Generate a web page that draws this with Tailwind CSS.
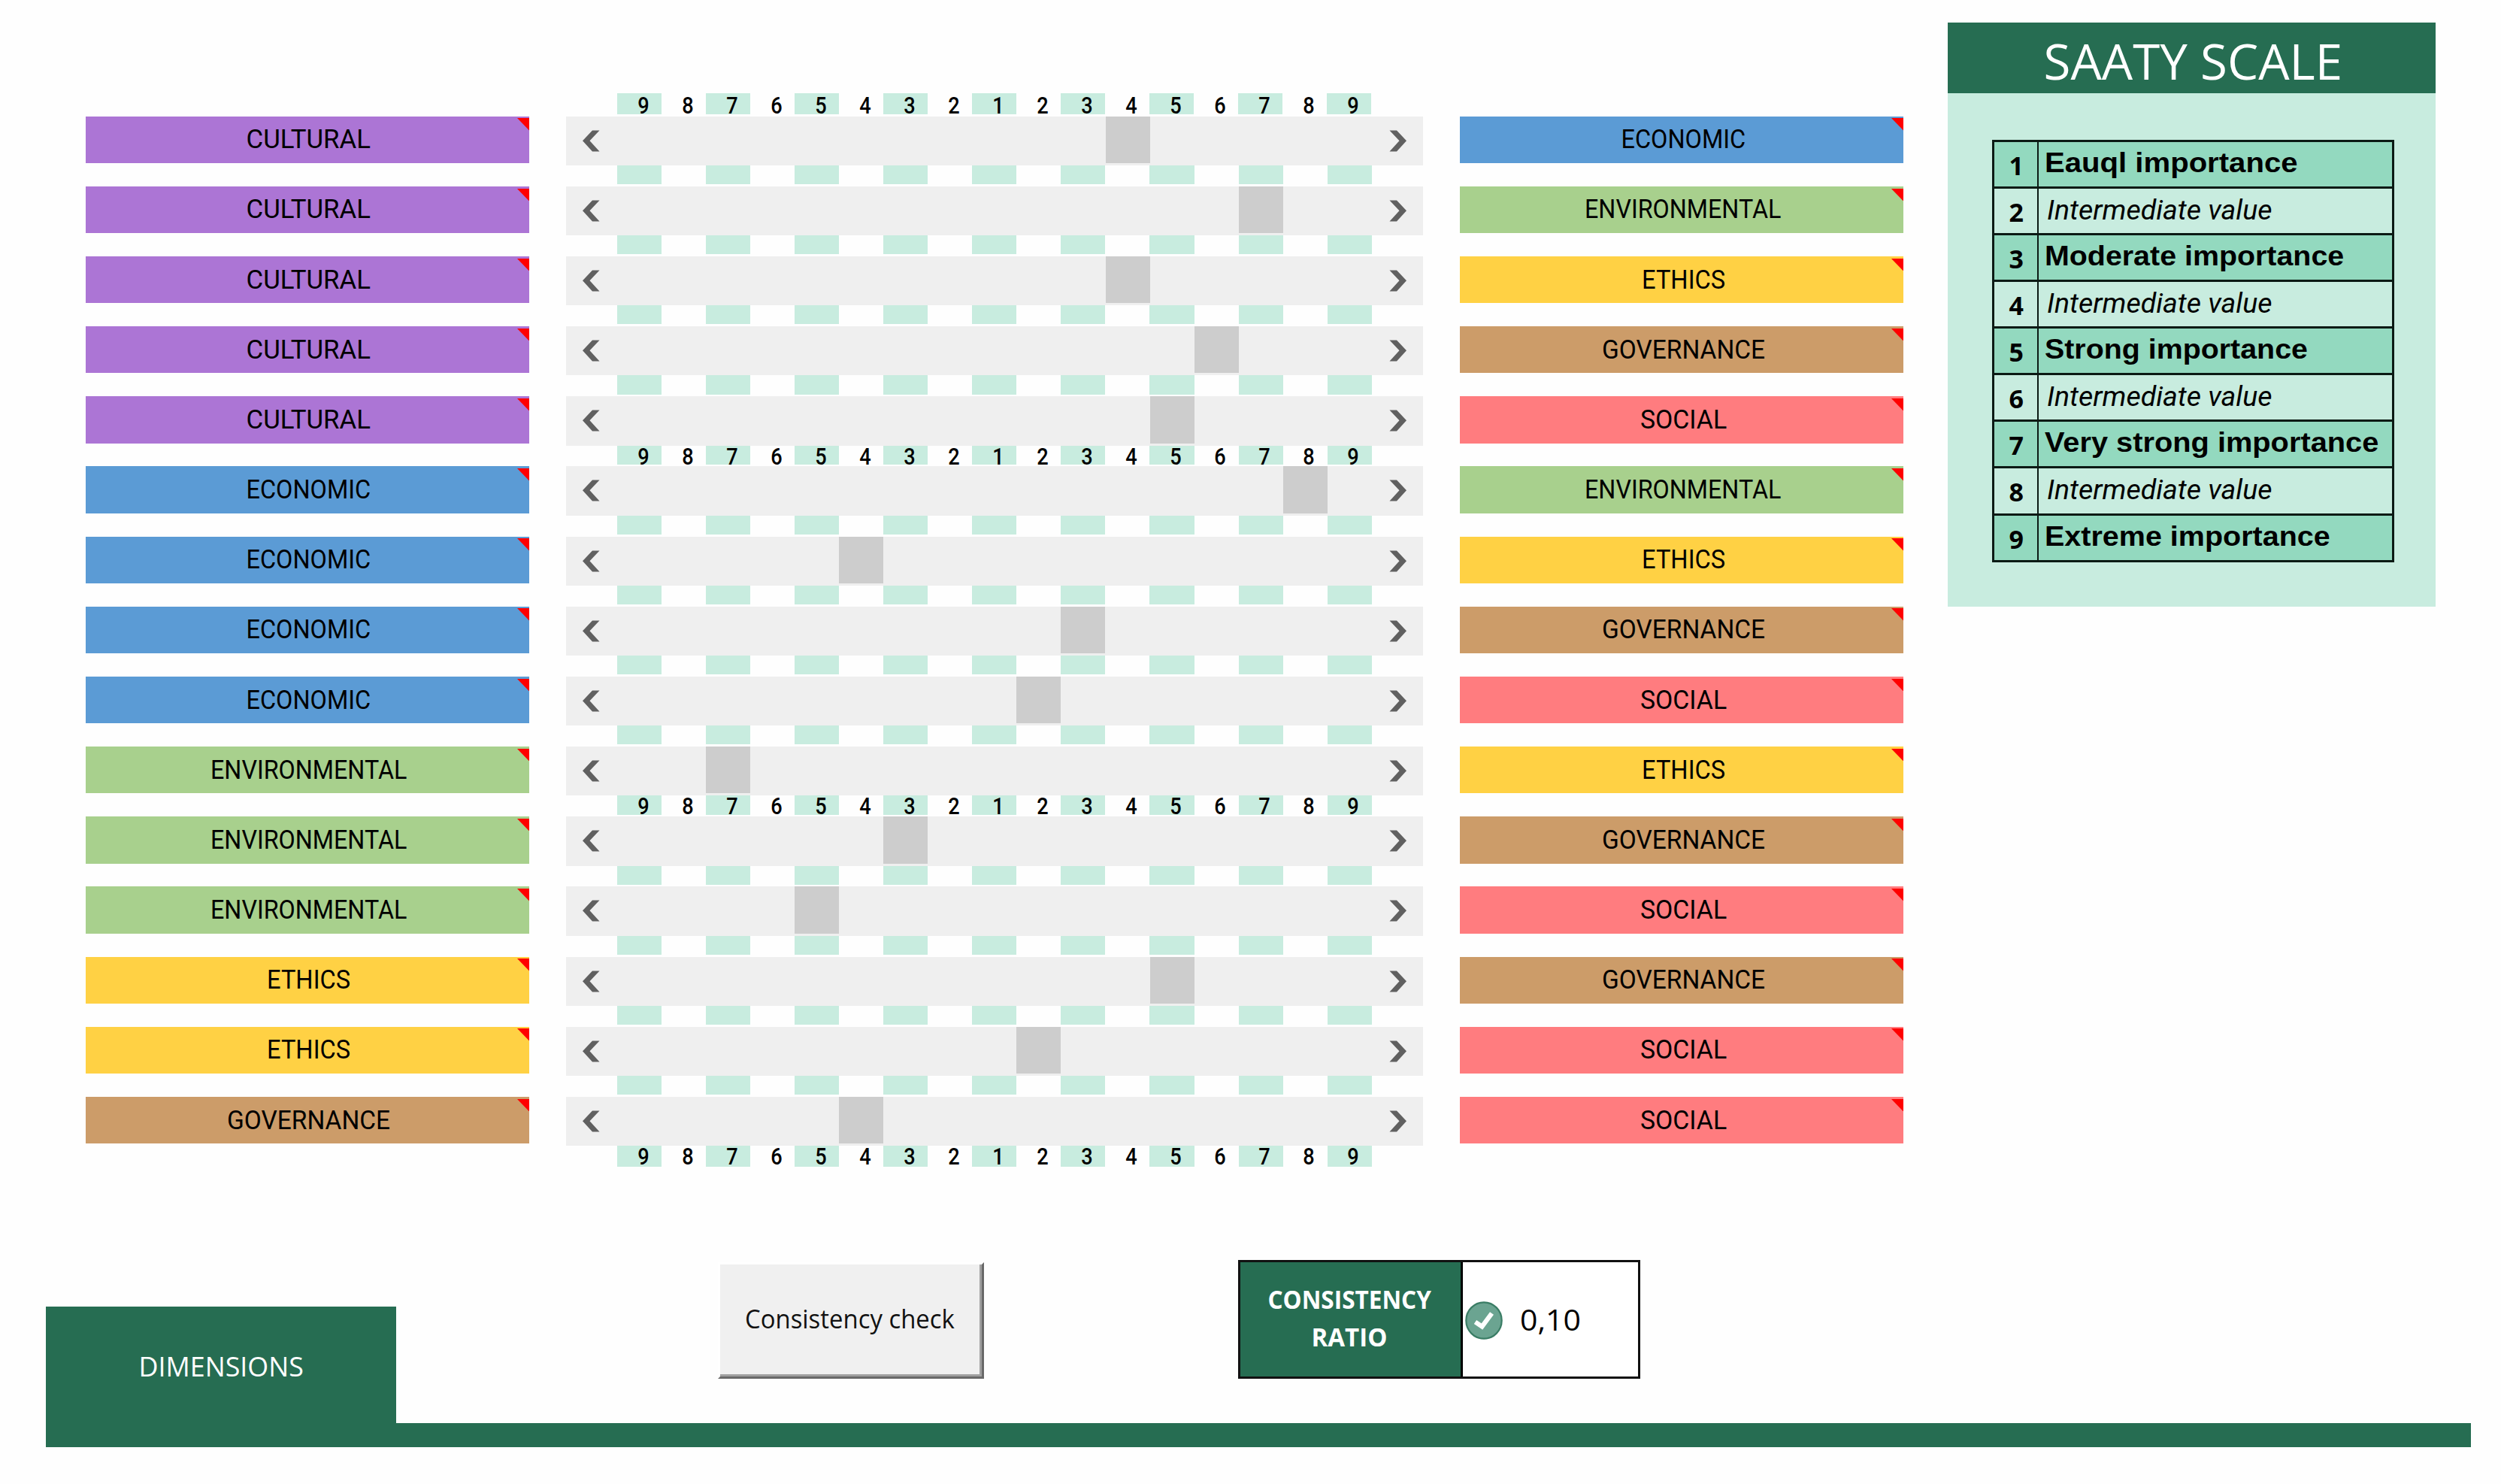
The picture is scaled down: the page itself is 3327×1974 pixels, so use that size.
<!DOCTYPE html>
<html lang="en">
<head>
<meta charset="utf-8">
<title>Dimensions</title>
<script src="https://cdn.jsdelivr.net/npm/@tailwindcss/browser@4"></script>
</head>
<body class="bg-[#fefefe] w-[3327px] h-[1974px] overflow-hidden text-black">
<main class="flex h-[1676px] items-start">
  <section class="pl-[113.5px] pt-[123.5px] w-[2591px]">
    <div class="pl-[707.7px]"><div id="top" class="flex h-[28.5px]"></div></div>
    <div class="h-[2.7px]"></div>
    <div id="rows"></div>
  </section>
  <aside class="mt-[30.3px] w-[649px] h-[776.4px] bg-[#c8ecdf] font-['Open_Sans','Noto_Sans',sans-serif]">
    <h1 class="h-[93.5px] bg-[#266d52] text-white flex items-center justify-center text-[66px] leading-none pt-[5px] pl-[3px]"><span data-w="398" class="inline-block whitespace-nowrap">SAATY SCALE</span></h1>
    <div id="scale" class="mt-[62px] ml-[59px] w-[534.5px] border-[3px] border-b-0 border-[#0b1a14]"></div>
  </aside>
</main>
<footer class="font-['Open_Sans','Noto_Sans',sans-serif]">
  <div class="flex h-[217.3px] items-start pl-[60.5px]">
    <div class="mt-[62px] w-[466px] h-[155.5px] bg-[#266d52] text-white flex justify-center pt-[55px] text-[36px] leading-[50px] pl-[2px]"><span data-w="219" class="inline-block origin-center whitespace-nowrap h-[50px]">DIMENSIONS</span></div>
    <button class="ml-[428.5px] mt-[3px] w-[354px] h-[155.3px] bg-[#f0f0f0] border-[3px] border-t-white border-l-white border-r-[#696969] border-b-[#696969] shadow-[inset_-3px_-3px_0_#a0a0a0] flex items-center justify-center text-[35px] leading-[50px] text-[#111] pb-[6px] pr-[4px]"><span data-w="279" class="inline-block whitespace-nowrap">Consistency check</span></button>
    <div class="ml-[338px] w-[534.5px] h-[158.3px] border-[3px] border-[#111] flex bg-white">
      <div class="w-[295.5px] shrink-0 border-r-[3px] border-black bg-[#266d52] text-white text-[34px] font-bold leading-[50px] flex flex-col items-center pt-[24px] pr-[3px]"><span data-w="217" class="inline-block whitespace-nowrap">CONSISTENCY</span><span data-w="101" class="inline-block whitespace-nowrap">RATIO</span></div>
      <div class="flex items-center pl-[3px]">
        <svg class="w-[50px] h-[51px] mt-[3px]" viewBox="0 0 50 51"><ellipse cx="25" cy="25.5" rx="23.7" ry="24.2" fill="#6ba491" stroke="#3a7d65" stroke-width="2.2"/><path d="M13.5 27.5 L22.5 33.500 L35.500 16" fill="none" stroke="#fff" stroke-width="6.200"/></svg>
        <span class="ml-[23px] text-[39px] leading-[50px]"><span data-w="81" class="inline-block origin-left whitespace-nowrap">0,10</span></span>
      </div>
    </div>
  </div>
  <div class="ml-[60.5px] w-[3226.500px] h-[31.4px] bg-[#266d52]"></div>
</footer>
<script>
const DIMS = {
  CULTURAL: ['bg-[#ac75d5]', 165], ECONOMIC: ['bg-[#5b9bd5]', 166], ENVIRONMENTAL: ['bg-[#a8d08d]', 261],
  ETHICS: ['bg-[#ffd144]', 111], GOVERNANCE: ['bg-[#cc9c69]', 217], SOCIAL: ['bg-[#ff7c7f]', 115],
};
// left dimension, right dimension, thumb column (0 = leftmost 9, 16 = rightmost 9)
const PAIRS = [
  ['CULTURAL', 'ECONOMIC', 11], ['CULTURAL', 'ENVIRONMENTAL', 14], ['CULTURAL', 'ETHICS', 11],
  ['CULTURAL', 'GOVERNANCE', 13], ['CULTURAL', 'SOCIAL', 12], ['ECONOMIC', 'ENVIRONMENTAL', 15],
  ['ECONOMIC', 'ETHICS', 5], ['ECONOMIC', 'GOVERNANCE', 10], ['ECONOMIC', 'SOCIAL', 9],
  ['ENVIRONMENTAL', 'ETHICS', 2], ['ENVIRONMENTAL', 'GOVERNANCE', 6], ['ENVIRONMENTAL', 'SOCIAL', 4],
  ['ETHICS', 'GOVERNANCE', 12], ['ETHICS', 'SOCIAL', 9], ['GOVERNANCE', 'SOCIAL', 5],
];
const band = (numbers, leading) => Array.from({ length: 17 }, (_, i) =>
  `<div class="w-[59.03px] shrink-0 h-full flex justify-center pl-[10px] text-[31.500px] ${leading} font-['Roboto',sans-serif] font-medium ${i % 2 ? '' : 'bg-[#c8ecdf]'}">${numbers ? `<span data-w="15.5" class="inline-block h-[31px]">${Math.abs(8 - i) + 1}</span>` : ''}</div>`).join('');
const label = (n) => `<div class="relative w-[590px] h-[62.3px] flex items-center justify-center pl-[4px] text-[35px] leading-none font-['Roboto',sans-serif] ${DIMS[n][0]}"><span data-w="${DIMS[n][1]}" class="inline-block whitespace-nowrap">${n}</span><svg class="absolute right-0 top-[2.700px] w-[16px] h-[16.500px]" viewBox="0 0 16 16.500"><path d="M0 0H16V16.500Z" fill="#f00"/></svg></div>`;
document.getElementById('top').innerHTML = band(true, 'leading-[33px]');
document.getElementById('rows').innerHTML = PAIRS.map(([l, r, t], i) => `
  <div class="flex h-[93.16px] items-start">
    ${label(l)}
    <div class="ml-[49.500px] w-[1139.700px]">
      <div class="h-[65.3px] bg-[#efefef] flex items-start">
        <svg class="mt-[18px] ml-[21.500px] w-[23px] h-[29px] shrink-0" viewBox="0 0 23 29"><path d="M13 .5H22.500L9.500 14.300L22.500 28.500H13L0 14.300Z" fill="#606060"/></svg>
        <div class="ml-[23.700px] w-[1003.500px] shrink-0 flex"><div class="h-[62.300px] w-[59px] bg-[#cdcdcd]" style="margin-left:${t * 59.03}px"></div></div>
        <svg class="mt-[18px] ml-[23.500px] w-[23px] h-[29px] shrink-0" viewBox="0 0 23 29"><path d="M10 .5H.500L13.500 14.300L.500 28.500H10L23 14.300Z" fill="#606060"/></svg>
      </div>
      <div class="ml-[68.3px] flex ${i === 14 ? 'h-[27.860px]' : 'h-[25.200px]'}">${band(i % 5 === 4, 'leading-[29px]')}</div>
    </div>
    <div class="ml-[49.500px]">${label(r)}</div>
  </div>`).join('');
const SCALE = [['Eauql importance', 336], ['', 0], ['Moderate importance', 398], ['', 0], ['Strong importance', 350], ['', 0], ['Very strong importance', 444], ['', 0], ['Extreme importance', 380]];
document.getElementById('scale').innerHTML = SCALE.map(([s, w], i) => `
  <div class="flex h-[62.100px] border-b-[3px] border-[#0b1a14] ${s ? 'bg-[#93d9bf]' : ''}">
    <div class="w-[58.500px] shrink-0 border-r-[2.500px] border-[#0b1a14] text-center text-[34px] leading-[62px] font-bold pl-[2px]">${i + 1}</div>
    ${s ? `<div class="pl-[8.500px] text-[37px] leading-[56px] font-bold font-['Liberation_Sans',sans-serif]"><span data-w="${w}" class="inline-block origin-left whitespace-nowrap h-[56px]">${s}</span></div>`
        : `<div class="pl-[11px] text-[37px] leading-[58px] italic font-['Roboto',sans-serif]"><span data-w="300" class="inline-block origin-left whitespace-nowrap h-[58px]">Intermediate value</span></div>`}
  </div>`).join('');
const fit = (e) => { e.style.transform = `scaleX(${e.dataset.w / e.offsetWidth})`; };
const observer = new ResizeObserver((entries) => entries.forEach((x) => fit(x.target)));
document.querySelectorAll('[data-w]').forEach((e) => { fit(e); observer.observe(e); });
</script>
</body>
</html>
